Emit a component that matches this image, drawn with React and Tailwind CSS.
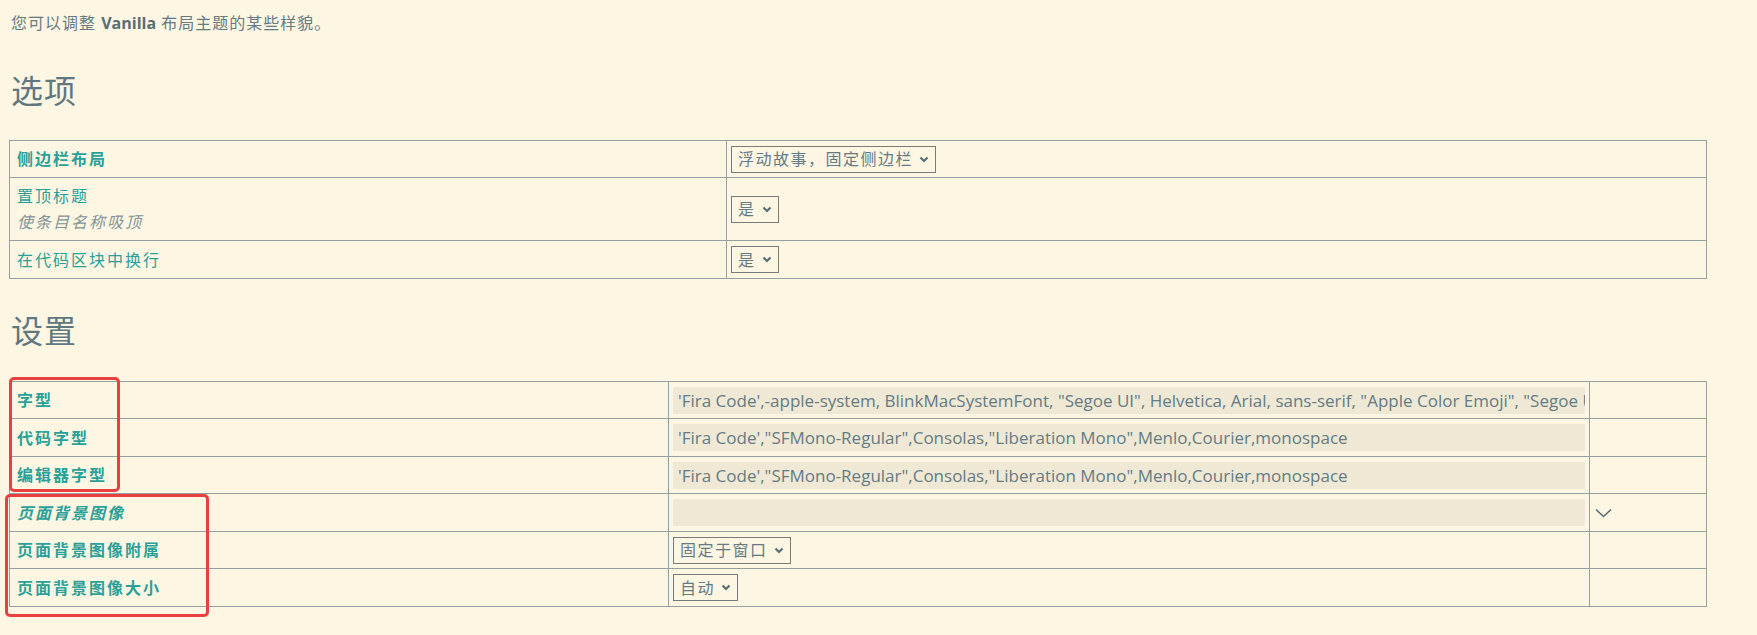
import React from 'react';

const Chevron = () => (
  <svg width="10" height="7" viewBox="0 0 10 7" className="shrink-0">
    <path d="M1.5 1.5 5 5l3.5-3.5" fill="none" stroke="#586e75" strokeWidth="2.2" />
  </svg>
);

const Select = ({ label }) => (
  <div className="inline-flex h-[27px] items-center gap-[6px] border border-[#7a7a7a] px-[6px] text-[16px] tracking-[1.5px] text-[#657b83]">
    <span>{label}</span>
    <Chevron />
  </div>
);

const Field = ({ value }) => (
  <div className="h-[27px] w-full overflow-hidden whitespace-nowrap bg-[#eee8d5] pl-[5px] font-['Open_Sans',sans-serif] text-[17px] leading-[27px] text-[#657b83]">
    {value}
  </div>
);

const options = [
  { label: '侧边栏布局', bold: true, h: 'h-[36px]', control: <Select label="浮动故事，固定侧边栏" /> },
  { label: '置顶标题', hint: '使条目名称吸顶', h: 'h-[63px]', control: <Select label="是" /> },
  { label: '在代码区块中换行', h: 'h-[38px]', control: <Select label="是" /> },
];

const mono = `'Fira Code',"SFMono-Regular",Consolas,"Liberation Mono",Menlo,Courier,monospace`;

const settings = [
  { label: '字型', h: 'h-[36px]', control: <Field value={`'Fira Code',-apple-system, BlinkMacSystemFont, "Segoe UI", Helvetica, Arial, sans-serif, "Apple Color Emoji", "Segoe UI Emoji", "Segoe UI Symbol"`} /> },
  { label: '代码字型', h: 'h-[38px]', control: <Field value={mono} /> },
  { label: '编辑器字型', h: 'h-[37px]', control: <Field value={mono} /> },
  { label: '页面背景图像', italic: true, h: 'h-[38px]', control: <Field value="" />, picker: true },
  { label: '页面背景图像附属', h: 'h-[37px]', control: <Select label="固定于窗口" /> },
  { label: '页面背景图像大小', h: 'h-[38px]', control: <Select label="自动" /> },
];

export default function App() {
  return (
    <div className="relative min-h-screen w-full bg-[#fdf6e3] pl-[9px] pr-[50px] pt-[11px] font-['Open_Sans','Noto_Sans_CJK_SC',sans-serif] text-[#657b83]">
      <p className="pl-[2px] text-[16px] leading-[24px] tracking-[1px]">
        您可以调整 <b className="font-bold tracking-normal text-[#586e75]">Vanilla</b> 布局主题的某些样貌。
      </p>

      <h2 className="mt-[36px] pl-[2px] text-[32px] font-normal leading-[40px] tracking-[1px] text-[#5f777f]">选项</h2>

      <div className="mt-[29px] border border-[#93a1a1]">
        {options.map((r, i) => (
          <div key={r.label} className={`grid grid-cols-[717px_1fr] ${r.h} ${i > 0 ? 'border-t border-[#93a1a1]' : ''}`}>
            <div className="flex flex-col justify-center border-r border-[#93a1a1] pl-[7px] text-[16px] leading-[26px] tracking-[2px]">
              <span className={`text-[#2aa198] ${r.bold ? 'font-bold' : ''}`}>{r.label}</span>
              {r.hint && <span className="italic text-[#839496]">{r.hint}</span>}
            </div>
            <div className="flex items-center pl-[4px]">{r.control}</div>
          </div>
        ))}
      </div>

      <h2 className="mt-[32px] pl-[2px] text-[32px] font-normal leading-[40px] tracking-[1px] text-[#5f777f]">设置</h2>

      <div className="mt-[30px] border border-[#93a1a1]">
        {settings.map((r, i) => (
          <div key={r.label} className={`grid grid-cols-[659px_921px_1fr] ${r.h} ${i > 0 ? 'border-t border-[#93a1a1]' : ''}`}>
            <div className="flex items-center border-r border-[#93a1a1] pl-[7px] text-[16px] tracking-[2px]">
              <span className={`font-bold text-[#2aa198] ${r.italic ? 'italic' : ''}`}>{r.label}</span>
            </div>
            <div className="flex items-center border-r border-[#93a1a1] px-[4px]">{r.control}</div>
            <div className="flex items-center pl-[5px]">
              {r.picker && (
                <svg width="17" height="10" viewBox="0 0 17 10">
                  <path d="M1 1.5 8.5 8.5 16 1.5" fill="none" stroke="#586e75" strokeWidth="1.6" />
                </svg>
              )}
            </div>
          </div>
        ))}
      </div>

      <div className="absolute left-[9px] top-[377px] h-[115px] w-[111px] rounded-[5px] border-[3px] border-[#e8403f]" />
      <div className="absolute left-[5px] top-[494px] h-[123px] w-[204px] rounded-[5px] border-[3px] border-[#e8403f]" />
    </div>
  );
}
